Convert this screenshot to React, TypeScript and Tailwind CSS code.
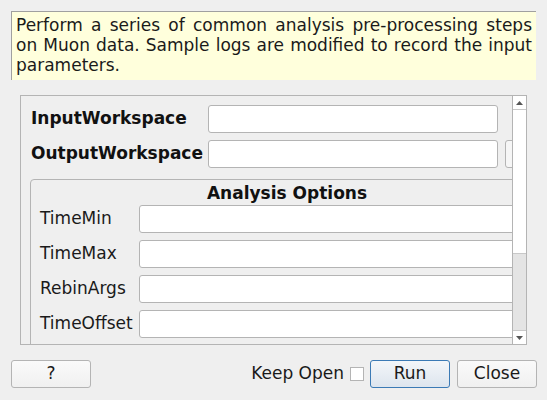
import React from "react";

const font = { fontFamily: '"DejaVu Sans", "Liberation Sans", sans-serif' };

function Field({ label, inputLeft }: { label: string; inputLeft: number }) {
  return (
    <div className="flex items-center h-[28px]">
      <div className="shrink-0 text-[17px] text-[#1a1a1a]" style={{ width: inputLeft }}>
        {label}
      </div>
      <div className="h-[28px] w-[400px] shrink-0 rounded-[3px] border border-[#b4b4b4] bg-white" />
    </div>
  );
}

export default function App() {
  return (
    <div className="w-[547px] h-[400px] bg-[#efefef] overflow-hidden" style={font}>
      <div className="pt-[11px] pl-[11px]">
        <div className="w-[525px] h-[69px] bg-[#ffffdc] border-t border-l border-[#a0a0a0] pl-[4px] pr-[4px] pt-[3px] text-[17px] leading-[20px] text-[#1a1a1a] text-justify">
          Perform a series of common analysis pre-processing steps on Muon data. Sample logs are modified to record the input parameters.
        </div>
      </div>
      <div className="mt-[15px] ml-[20px] w-[507px] h-[250px] border border-[#b4b4b4] flex overflow-hidden">
        <div className="relative w-[491px] h-full overflow-hidden">
          <div className="pl-[10px] pt-[9px] w-[560px]">
            <div className="flex items-center h-[28px]">
              <div className="w-[177px] shrink-0 font-bold text-[17px] text-[#111]">InputWorkspace</div>
              <div className="h-[28px] w-[290px] rounded-[3px] border border-[#b4b4b4] bg-white" />
            </div>
            <div className="flex items-center h-[28px] mt-[7px]">
              <div className="w-[177px] shrink-0 font-bold text-[17px] text-[#111]">OutputWorkspace</div>
              <div className="h-[28px] w-[290px] shrink-0 rounded-[3px] border border-[#b4b4b4] bg-white" />
              <div className="h-[28px] w-[40px] shrink-0 ml-[7px] rounded-[3px] border border-[#b4b4b4] bg-[#f6f6f6]" />
            </div>
            <div className="mt-[11px] w-[514px] h-[200px] rounded-[4px] border border-[#b4b4b4] ml-[-1px]">
              <div className="text-center font-bold text-[17px] leading-[24px] pt-[1px] text-[#111]">Analysis Options</div>
              <div className="pl-[9px] flex flex-col gap-[7px]">
                <Field label="TimeMin" inputLeft={99} />
                <Field label="TimeMax" inputLeft={99} />
                <Field label="RebinArgs" inputLeft={99} />
                <Field label="TimeOffset" inputLeft={99} />
              </div>
            </div>
          </div>
        </div>
        <div className="w-[14px] h-full border-l border-[#b4b4b4] bg-white flex flex-col">
          <div className="h-[14px] flex items-center justify-center border-b border-[#c8c8c8]">
            <svg width="7" height="4" viewBox="0 0 7 4"><path d="M0 4 L3.5 0 L7 4 Z" fill="#555" /></svg>
          </div>
          <div className="flex-1 flex flex-col">
            <div className="h-[143px]" />
            <div className="flex-1 bg-[#e4e4e4] border-t border-b border-[#c8c8c8]" />
          </div>
          <div className="h-[13px] flex items-center justify-center">
            <svg width="7" height="4" viewBox="0 0 7 4"><path d="M0 0 L7 0 L3.5 4 Z" fill="#555" /></svg>
          </div>
        </div>
      </div>
      <div className="mt-[15px] flex items-center h-[28px] pl-[11px]">
        <button className="w-[80px] h-[28px] rounded-[3px] border border-[#b4b4b4] bg-gradient-to-b from-[#fafafa] to-[#f0f0f0] text-[17px] text-[#1a1a1a]">?</button>
        <div className="flex-1" />
        <span className="text-[17px] text-[#1a1a1a] mr-[6px]">Keep Open</span>
        <div className="w-[14px] h-[14px] border border-[#b4b4b4] bg-white mr-[6px]" />
        <button className="w-[80px] h-[28px] rounded-[3px] border border-[#3b7ab5] bg-gradient-to-b from-[#f3f6f9] to-[#dde5ee] text-[17px] text-[#1a1a1a] mr-[7px]">Run</button>
        <button className="w-[80px] h-[28px] rounded-[3px] border border-[#b4b4b4] bg-gradient-to-b from-[#fafafa] to-[#f0f0f0] text-[17px] text-[#1a1a1a] mr-[10px]">Close</button>
      </div>
    </div>
  );
}
